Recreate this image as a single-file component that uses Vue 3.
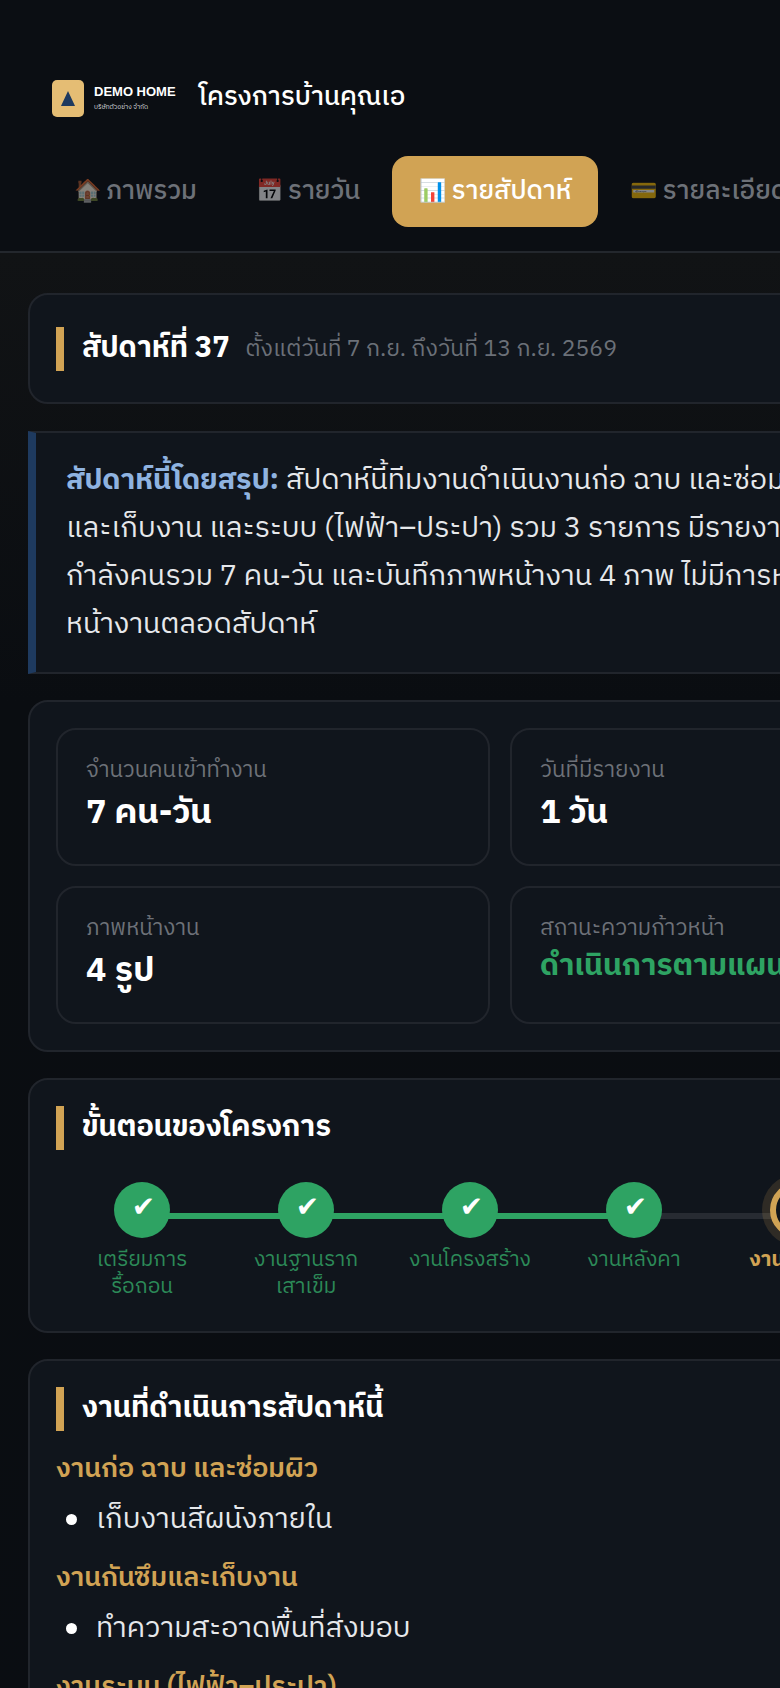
<script setup>
const tabs = [
  { icon: '🏠', label: 'ภาพรวม' },
  { icon: '📅', label: 'รายวัน' },
  { icon: '📊', label: 'รายสัปดาห์', active: true },
  { icon: '💳', label: 'รายละเอียดงวด' }
];

const stats = [
  { label: 'จำนวนคนเข้าทำงาน', value: '7 คน-วัน' },
  { label: 'วันที่มีรายงาน', value: '1 วัน' },
  { label: 'ภาพหน้างาน', value: '4 รูป' },
  { label: 'สถานะความก้าวหน้า', value: 'ดำเนินการตามแผน', good: true }
];

const steps = [
  { label: ['เตรียมการ', 'รื้อถอน'], state: 'done' },
  { label: ['งานฐานราก', 'เสาเข็ม'], state: 'done' },
  { label: ['งานโครงสร้าง'], state: 'done' },
  { label: ['งานหลังคา'], state: 'done', last: true },
  { label: ['งานก่อฉาบ'], state: 'current' },
  { label: ['งานระบบ'], state: 'todo' }
];

const groups = [
  { title: 'งานก่อ ฉาบ และซ่อมผิว', items: ['เก็บงานสีผนังภายใน'] },
  { title: 'งานกันซึมและเก็บงาน', items: ['ทำความสะอาดพื้นที่ส่งมอบ'] },
  { title: 'งานระบบ (ไฟฟ้า–ประปา)', items: ['ทดสอบระบบไฟฟ้าและประปา'] }
];
</script>

<template>
  <div class="page">
    <header class="topbar">
      <div class="brand">
        <div class="logo">
          <div class="logo-mark"><span class="logo-tri"></span></div>
          <div class="logo-text">
            <div class="logo-name">DEMO HOME</div>
            <div class="logo-sub">บริษัทตัวอย่าง จำกัด</div>
          </div>
        </div>
        <div class="project">โครงการบ้านคุณเอ</div>
      </div>
      <nav class="tabs">
        <div v-for="t in tabs" :key="t.label" class="tab" :class="{ 'tab--active': t.active }">
          <span class="tab-icon">{{ t.icon }}</span> {{ t.label }}
        </div>
      </nav>
    </header>

    <main class="content">
      <section class="card card--week">
        <h2 class="heading">
          <span>สัปดาห์ที่ 37</span>
          <small>ตั้งแต่วันที่ 7 ก.ย. ถึงวันที่ 13 ก.ย. 2569</small>
        </h2>
      </section>

      <section class="summary">
        <strong>สัปดาห์นี้โดยสรุป:</strong> สัปดาห์นี้ทีมงานดำเนินงานก่อ ฉาบ และซ่อมผิว งานกันซึม<br>
        และเก็บงาน และระบบ (ไฟฟ้า–ประปา) รวม 3 รายการ มีรายงานเข้าหน้างาน 1 วัน<br>
        กำลังคนรวม 7 คน-วัน และบันทึกภาพหน้างาน 4 ภาพ ไม่มีการหยุดงาน<br>
        หน้างานตลอดสัปดาห์
      </section>

      <section class="card card--stats">
        <div class="stats">
          <div v-for="s in stats" :key="s.label" class="stat">
            <div class="stat-label">{{ s.label }}</div>
            <div class="stat-value" :class="{ 'stat-value--good': s.good }">{{ s.value }}</div>
          </div>
        </div>
      </section>

      <section class="card card--steps">
        <h2 class="heading">ขั้นตอนของโครงการ</h2>
        <div class="steps">
          <div v-for="s in steps" :key="s.label[0]" class="step" :class="['step--' + s.state, { 'step--last': s.last }]">
            <div class="step-dot">
              <template v-if="s.state === 'done'">✔</template>
            </div>
            <div class="step-label">
              <div v-for="l in s.label" :key="l">{{ l }}</div>
            </div>
          </div>
        </div>
      </section>

      <section class="card">
        <h2 class="heading">งานที่ดำเนินการสัปดาห์นี้</h2>
        <div v-for="g in groups" :key="g.title" class="group">
          <h3 class="group-title">{{ g.title }}</h3>
          <ul class="group-list">
            <li v-for="i in g.items" :key="i">{{ i }}</li>
          </ul>
        </div>
      </section>
    </main>
  </div>
</template>

<style>
html, body {
  margin: 0;
  background: #0a0c10;
  overflow-x: hidden;
}
</style>

<style scoped>
.page {
  width: 1030px;
  min-height: 1688px;
  background: #0a0d12;
  color: #fff;
  font-family: "IBM Plex Sans Thai", "Noto Sans Thai", "Noto Sans", "Liberation Sans", sans-serif;
}

.topbar {
  height: 253px;
  padding-top: 79px;
  box-sizing: border-box;
  background: #0b0e13;
  border-bottom: 2px solid #23272d;
}

.brand {
  display: flex;
  align-items: center;
  gap: 23px;
  padding-left: 52px;
  height: 38px;
}

.logo {
  display: flex;
  align-items: center;
  gap: 10px;
}

.logo-mark {
  width: 32px;
  height: 37px;
  border-radius: 5px;
  background: #e5bd74;
  display: flex;
  align-items: center;
  justify-content: center;
}

.logo-tri {
  width: 0;
  height: 0;
  border-left: 7px solid transparent;
  border-right: 7px solid transparent;
  border-bottom: 15px solid #1e3a5f;
}

.logo-name {
  font-family: "Liberation Sans", sans-serif;
  font-weight: 700;
  font-size: 13px;
  line-height: 14px;
  white-space: nowrap;
}

.logo-sub {
  font-size: 6.5px;
  line-height: 10px;
  margin-top: 3px;
  color: #d5d8dc;
  white-space: nowrap;
}

.project {
  font-size: 26px;
  font-weight: 500;
  line-height: 38px;
}

.tabs {
  display: flex;
  gap: 5px;
  margin-top: 39px;
  padding-left: 47px;
}

.tab {
  height: 71px;
  box-sizing: border-box;
  padding: 0 27px;
  display: flex;
  align-items: center;
  gap: 5px;
  font-size: 26px;
  font-weight: 500;
  color: #6d7178;
  border-radius: 16px;
  white-space: nowrap;
}

.tab-icon {
  font-size: 22px;
  opacity: 0.5;
}

.tab--active {
  background: #d1a354;
  color: #fff;
}

.tab--active .tab-icon {
  opacity: 1;
}

.content {
  padding: 40px 28px;
  display: flex;
  flex-direction: column;
  gap: 26px;
  background: linear-gradient(#111315 0, #0a0d11 450px, #0a0d12 100%);
}

.card {
  background: #10151c;
  border: 2px solid #21252c;
  border-radius: 20px;
  padding: 26px;
}

.heading {
  margin: 0;
  border-left: 8px solid #d1a354;
  padding-left: 18px;
  min-height: 44px;
  display: flex;
  align-items: center;
  gap: 16px;
  font-size: 29px;
  font-weight: 700;
  line-height: 44px;
}

.heading small {
  font-size: 23px;
  font-weight: 400;
  color: #6b7078;
}

.card--week {
  padding-top: 32px;
  padding-bottom: 31px;
  margin-bottom: 1px;
}

.summary {
  background: #10151c;
  border: 2px solid #21252c;
  border-left: 8px solid #1e3a5f;
  padding: 24px 30px 23px;
  font-size: 28.8px;
  line-height: 48px;
  color: #e6e8eb;
  white-space: nowrap;
  overflow: hidden;
}

.summary strong {
  color: #8fb3e0;
  font-weight: 700;
}

.stats {
  display: grid;
  grid-template-columns: 434px 434px;
  gap: 20px;
}

.stat {
  height: 138px;
  box-sizing: border-box;
  border: 2px solid #21252c;
  border-radius: 20px;
  padding: 25px 28px;
}

.stat-label {
  font-size: 22.4px;
  line-height: 32px;
  color: #6d7178;
}

.stat-value {
  font-size: 34px;
  font-weight: 700;
  line-height: 53px;
}

.stat-value--good {
  font-size: 30px;
  line-height: 44px;
  color: #2ea363;
}

.card--steps {
  padding-bottom: 30px;
}

.steps {
  display: flex;
  margin-top: 32px;
  padding-left: 4px;
}

.step {
  position: relative;
  width: 164px;
  display: flex;
  flex-direction: column;
  align-items: center;
  flex: none;
}

.step::after {
  content: "";
  position: absolute;
  left: 50%;
  top: 31px;
  width: 164px;
  height: 6px;
  background: #2ea363;
}

.step--current::after,
.step--last::after {
  background: #272b32;
}

.step--todo::after {
  display: none;
}

.step-dot {
  position: relative;
  z-index: 1;
  width: 56px;
  height: 56px;
  padding-left: 3px;
  border-radius: 50%;
  box-sizing: border-box;
  background: #2ea363;
  color: #fff;
  font-family: "DejaVu Sans", sans-serif;
  font-size: 28px;
  line-height: 50px;
  text-align: center;
}

.step--current .step-dot {
  background: #10151c;
  border: 6px solid #d1a354;
  box-shadow: 0 0 0 8px rgba(209, 163, 84, 0.16);
}

.step--todo .step-dot {
  background: #21252c;
}

.step-label {
  margin-top: 9px;
  font-size: 21px;
  line-height: 27px;
  text-align: center;
  color: #2c8a58;
  white-space: nowrap;
}

.step--current .step-label {
  color: #d1a354;
  font-weight: 700;
}

.step--todo .step-label {
  color: #6d7178;
}

.heading + .group {
  margin-top: 5px;
}

.group-title {
  margin: 19px 0 0;
  font-size: 27px;
  font-weight: 600;
  line-height: 38px;
  color: #d1a354;
}

.group-list {
  margin: 12px 0 0;
  padding-left: 40px;
  list-style: none;
  font-size: 28.8px;
  line-height: 40px;
  color: #e6e8eb;
}

.group-list li {
  position: relative;
}

.group-list li::before {
  content: "";
  position: absolute;
  left: -30px;
  top: 14px;
  width: 11px;
  height: 11px;
  border-radius: 50%;
  background: #fff;
}
</style>
